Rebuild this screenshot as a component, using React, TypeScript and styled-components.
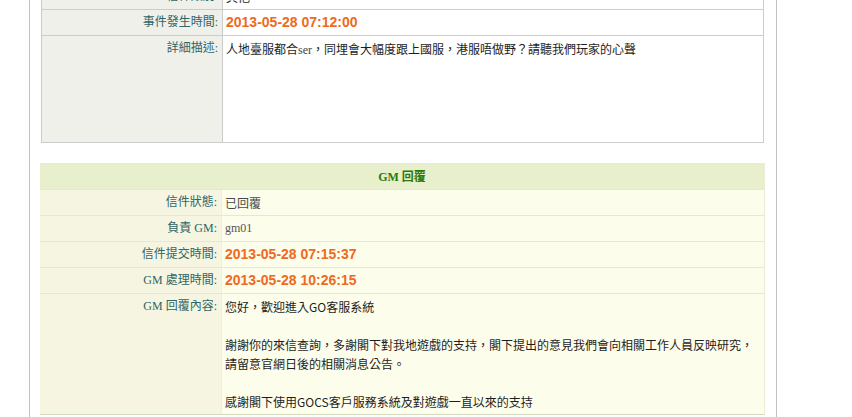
import React from "react";
import styled, { createGlobalStyle } from "styled-components";

const GlobalStyle = createGlobalStyle`
  html, body { margin: 0; padding: 0; background: #ffffff; }
  body { font-family: "Liberation Serif", "Noto Sans CJK TC", serif; font-size: 12px; }
`;

const Page = styled.div`
  width: 852px;
  height: 417px;
  overflow: hidden;
  background: #ffffff;
`;

const Frame = styled.div`
  box-sizing: border-box;
  margin-left: 29px;
  width: 748px;
  min-height: 460px;
  border-left: 1px solid #c2c2c2;
  border-right: 1px solid #c2c2c2;
  padding: 0 12px 0 11px;
  display: flex;
  flex-direction: column;
  gap: 20px;
`;

const InfoTable = styled.div`
  margin-top: -17px;
  border: 1px solid #cccccc;
  display: flex;
  flex-direction: column;
`;

const GmTable = styled.div`
  margin: 0 -1px;
  display: flex;
  flex-direction: column;
  border-bottom: 1px solid #d3d8c0;
  border-right: 1px solid #ecedd8;
`;

const GmHeader = styled.div`
  height: 26px;
  background: #e8efcd;
  display: flex;
  align-items: center;
  justify-content: center;
  font-weight: bold;
  font-size: 12px;
  color: #2b7a0b;
  font-family: "Liberation Serif", "Noto Sans CJK TC", serif;
`;

const Row = styled.div<{ $tone: "info" | "gm"; $first?: boolean; $height: number }>`
  box-sizing: border-box;
  display: flex;
  height: ${(p) => p.$height}px;
  border-top: ${(p) =>
    p.$first ? "none" : p.$tone === "info" ? "1px solid #cccccc" : "1px solid #e6e8cf"};
`;

const Label = styled.div<{ $tone: "info" | "gm"; $top?: boolean }>`
  box-sizing: border-box;
  width: ${(p) => (p.$tone === "info" ? 181 : 182)}px;
  flex: none;
  background: ${(p) => (p.$tone === "info" ? "#f0f0eb" : "#f5f5e1")};
  border-right: 1px solid ${(p) => (p.$tone === "info" ? "#cccccc" : "#eeeedb")};
  color: #2f6666;
  text-align: right;
  padding: ${(p) => (p.$top ? "3px 4px 0 0" : "0 4px 0 0")};
  display: flex;
  align-items: ${(p) => (p.$top ? "flex-start" : "center")};
  justify-content: flex-end;
  line-height: 19px;
  white-space: nowrap;
`;

const Value = styled.div<{ $tone: "info" | "gm"; $top?: boolean; $muted?: boolean }>`
  flex: 1;
  background: ${(p) => (p.$tone === "info" ? "#ffffff" : "#fdfdec")};
  color: ${(p) => (p.$muted ? "#4a4a4a" : "#1e1e1e")};
  padding: ${(p) => (p.$top ? "3px 0 0 3px" : "0 0 0 3px")};
  display: flex;
  flex-direction: column;
  justify-content: ${(p) => (p.$top ? "flex-start" : "center")};
  line-height: 19px;
  font-family: "Noto Sans CJK TC", "Liberation Sans", sans-serif;
`;

const SerifText = styled.span`
  font-family: "Liberation Serif", serif;
  color: #555555;
`;

const Stamp = styled.span`
  font-family: "Liberation Sans", Arial, sans-serif;
  font-weight: bold;
  font-size: 14px;
  color: #ee6a22;
`;

const Line = styled.div`
  min-height: 19px;
  white-space: nowrap;
`;

const Ser = styled.span`
  font-family: "Liberation Serif", serif;
  color: #444;
`;

export default function App() {
  return (
    <Page>
      <GlobalStyle />
      <Frame>
        <InfoTable>
          <Row $tone="info" $first $height={25}>
            <Label $tone="info">信件類別:</Label>
            <Value $tone="info">其他</Value>
          </Row>
          <Row $tone="info" $height={26}>
            <Label $tone="info">事件發生時間:</Label>
            <Value $tone="info">
              <Stamp>2013-05-28 07:12:00</Stamp>
            </Value>
          </Row>
          <Row $tone="info" $height={107}>
            <Label $tone="info" $top>詳細描述:</Label>
            <Value $tone="info" $top>
              <Line>
                人地臺服都合<Ser>ser</Ser>，同埋會大幅度跟上國服，港服唔做野？請聽我們玩家的心聲
              </Line>
            </Value>
          </Row>
        </InfoTable>

        <GmTable>
          <GmHeader>GM 回覆</GmHeader>
          <Row $tone="gm" $height={26}>
            <Label $tone="gm">信件狀態:</Label>
            <Value $tone="gm" $muted>已回覆</Value>
          </Row>
          <Row $tone="gm" $height={26}>
            <Label $tone="gm">負責 GM:</Label>
            <Value $tone="gm">
              <SerifText>gm01</SerifText>
            </Value>
          </Row>
          <Row $tone="gm" $height={26}>
            <Label $tone="gm">信件提交時間:</Label>
            <Value $tone="gm">
              <Stamp>2013-05-28 07:15:37</Stamp>
            </Value>
          </Row>
          <Row $tone="gm" $height={26}>
            <Label $tone="gm">GM 處理時間:</Label>
            <Value $tone="gm">
              <Stamp>2013-05-28 10:26:15</Stamp>
            </Value>
          </Row>
          <Row $tone="gm" $height={121}>
            <Label $tone="gm" $top>GM 回覆內容:</Label>
            <Value $tone="gm" $top>
              <Line>您好，歡迎進入GO客服系統</Line>
              <Line />
              <Line>謝謝你的來信查詢，多謝閣下對我地遊戲的支持，閣下提出的意見我們會向相關工作人員反映研究，</Line>
              <Line>請留意官網日後的相關消息公告。</Line>
              <Line />
              <Line>感謝閣下使用GOCS客戶服務系統及對遊戲一直以來的支持</Line>
            </Value>
          </Row>
        </GmTable>
      </Frame>
    </Page>
  );
}
